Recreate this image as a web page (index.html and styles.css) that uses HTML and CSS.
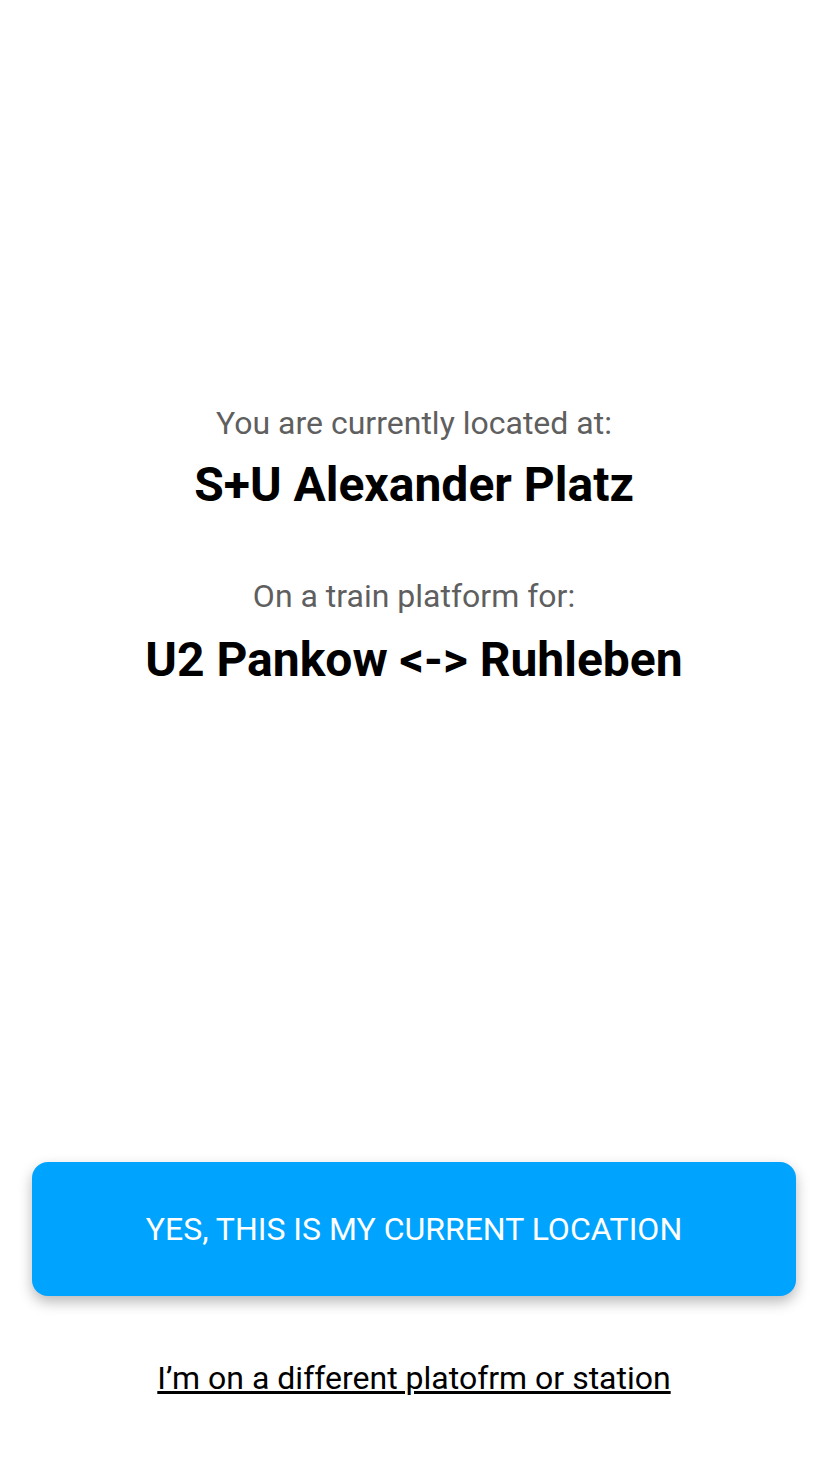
FILE: index.html
```html
<!DOCTYPE html>
<html>
<head>
<meta charset="utf-8">
<link rel="stylesheet" href="styles.css">
</head>
<body>
<div class="screen">
  <div class="info">
    <p class="label">You are currently located at:</p>
    <h1 class="value">S+U Alexander Platz</h1>
    <p class="label label-second">On a train platform for:</p>
    <h1 class="value value-second">U2 Pankow &lt;-&gt; Ruhleben</h1>
  </div>
  <div class="actions">
    <button class="confirm">YES, THIS IS MY CURRENT LOCATION</button>
    <a class="other" href="#">I’m on a different platofrm or station</a>
  </div>
</div>
</body>
</html>
```
FILE: styles.css
```css
html, body {
  margin: 0;
  padding: 0;
  background: #ffffff;
}
body {
  font-family: Roboto, "Noto Sans", sans-serif;
}
.screen {
  width: 828px;
  height: 1472px;
  display: flex;
  flex-direction: column;
  box-sizing: border-box;
}
.info {
  padding-top: 403px;
  display: flex;
  flex-direction: column;
  align-items: center;
  flex: 1;
}
.label {
  margin: 0;
  font-size: 32px;
  line-height: 40px;
  color: #5f5f5f;
  font-weight: 400;
}
.label-second {
  margin-top: 63px;
}
.value {
  margin: 14px 0 0;
  font-size: 48px;
  line-height: 56px;
  font-weight: 700;
  color: #000000;
}
.value-second {
  margin-top: 16px;
}
.actions {
  display: flex;
  flex-direction: column;
  align-items: center;
  padding: 0 32px 74px;
}
.confirm {
  width: 100%;
  height: 134px;
  border: none;
  border-radius: 16px;
  background: #00a4ff;
  color: #ffffff;
  font-family: Roboto, "Noto Sans", sans-serif;
  font-size: 32px;
  font-weight: 400;
  box-shadow: 0 6px 14px rgba(0, 0, 0, 0.28);
}
.other {
  margin-top: 62px;
  font-size: 32px;
  line-height: 40px;
  color: #000000;
  text-decoration: underline;
}
```
